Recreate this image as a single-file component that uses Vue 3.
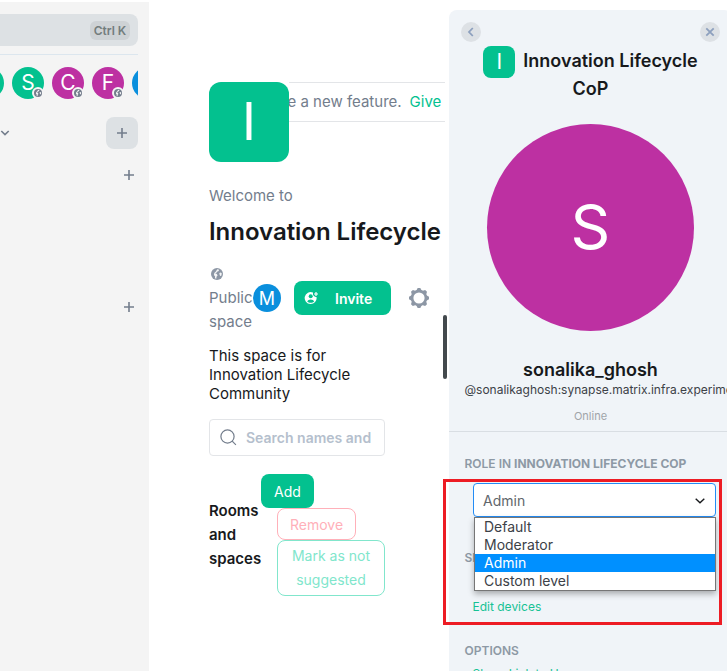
<script setup>
const rooms = [
  { letter: 'S', color: 'green' },
  { letter: 'C', color: 'purple' },
  { letter: 'F', color: 'purple' },
]
const roles = ['Default', 'Moderator', 'Admin', 'Custom level']
const selected = 'Admin'
const teeth = [0, 45, 90, 135, 180, 225, 270, 315]
</script>

<template>
  <div class="app">
    <svg class="defs" width="0" height="0" aria-hidden="true">
      <symbol id="globe" viewBox="0 0 12 12">
        <circle cx="6" cy="6" r="6" fill="currentColor" />
        <path d="M6.200 1.200 8.200 1.700 7.400 3.200 6 3.700 5.500 4.800 4.200 5.300 5.900 6 6.600 7.400 5.500 8.700 5.300 10.800 3.900 10.200 4.100 8.400 2.900 7.100 3.300 5 4.900 3.400Z" class="land" />
        <path d="M8.300 4.900 9.800 4.600 10.800 5.500 10.300 7.700 9.100 7.900 8.600 6.500Z" class="land" />
      </symbol>
      <symbol id="plus" viewBox="0 0 10 10">
        <path d="M5 0v10M0 5h10" stroke="currentColor" stroke-width="1.6" />
      </symbol>
    </svg>

    <aside class="sidebar">
      <div class="search-bar"><kbd>Ctrl K</kbd></div>
      <div class="crumbs">
        <span class="crumb green cut-left"></span>
        <span v-for="r in rooms" :key="r.letter" class="crumb" :class="r.color">
          {{ r.letter }}
          <i class="badge"><svg width="8" height="8"><use href="#globe" /></svg></i>
        </span>
        <span class="crumb blue"></span>
      </div>
      <div class="space-head">
        <svg width="10" height="6" viewBox="0 0 10 6"><path d="M1.300 1 5 4.600 8.700 1" fill="none" stroke="currentColor" stroke-width="1.600" /></svg>
        <button class="plus-btn"><svg width="10" height="10"><use href="#plus" /></svg></button>
      </div>
      <div class="section-plus"><svg width="10" height="10"><use href="#plus" /></svg></div>
      <div class="section-plus second"><svg width="10" height="10"><use href="#plus" /></svg></div>
    </aside>

    <main class="main">
      <div class="hero">
        <div class="space-avatar">I</div>
        <div class="banner"><span class="banner-text">e a new feature.</span><a>Give</a></div>
      </div>
      <div class="welcome">Welcome to</div>
      <h1>Innovation Lifecycle</h1>
      <div class="info">
        <div class="visibility">
          <div class="globe-line"><svg width="12" height="12"><use href="#globe" /></svg></div>
          <div>Public</div>
          <div>space</div>
        </div>
        <span class="member">M</span>
        <button class="invite">
          <svg width="15" height="14" viewBox="0 0 15 14">
            <path d="M9 1.500A6 6 0 1 0 12.600 6.200L10.600 5.600 9 4Z" fill="#fff" />
            <circle cx="6.700" cy="5.200" r="2" fill="#03c18f" />
            <path d="M3.200 10.500c1-2.800 6-2.800 7 0-1.700 1.700-5.300 1.700-7 0Z" fill="#03c18f" />
            <path d="M12 1v4M10 3h4" stroke="#fff" stroke-width="1.200" />
          </svg>
          <span>Invite</span>
        </button>
        <svg class="gear" width="20" height="20" viewBox="-10 -10 20 20">
          <path v-for="t in teeth" :key="t" d="M-3.200-6.500-1.300-10H1.300L3.200-6.500Z" :transform="`rotate(${t})`" fill="currentColor" />
          <circle r="6.900" fill="none" stroke="currentColor" stroke-width="2.600" />
        </svg>
      </div>
      <p class="topic">This space is for<br>Innovation Lifecycle<br>Community</p>
      <div class="search">
        <svg width="17" height="17" viewBox="0 0 17 17"><g fill="none" stroke="#737d8c" stroke-width="1.200"><circle cx="7.500" cy="7.500" r="6.600" /><path d="m12.200 12.200 3.700 3.700" /></g></svg>
        <span>Search names and</span>
      </div>
      <div class="rooms">
        <div class="rooms-title">Rooms<br>and<br>spaces</div>
        <div class="actions">
          <button class="add">Add</button>
          <button class="remove">Remove</button>
          <button class="mark">Mark as not<br>suggested</button>
        </div>
      </div>
      <div class="scroll-thumb"></div>
    </main>

    <section class="panel">
      <div class="nav">
        <button><svg width="8" height="10" viewBox="0 0 8 10"><path d="M5.800 1 2 5l3.800 4" fill="none" stroke="currentColor" stroke-width="1.800" /></svg></button>
        <button><svg width="10" height="10" viewBox="0 0 10 10"><path d="m1.300 1.300 7.400 7.400M8.700 1.300 1.300 8.700" stroke="currentColor" stroke-width="1.800" /></svg></button>
      </div>
      <div class="title">
        <div class="title-row"><span class="mini">I</span><span class="title-text">Innovation Lifecycle</span></div>
        <div>CoP</div>
      </div>
      <div class="portrait">S</div>
      <h2>sonalika_ghosh</h2>
      <div class="user-id">@sonalikaghosh:synapse.matrix.infra.experiment</div>
      <div class="status">Online</div>
      <div class="details">
        <h3>ROLE IN <b>INNOVATION LIFECYCLE COP</b></h3>
        <div class="select">
          <span>{{ selected }}</span>
          <svg width="10" height="6" viewBox="0 0 10 6"><path d="M.7.8 5 4.700 9.300.8" fill="none" stroke="#17191c" stroke-width="1.400" /></svg>
          <ul class="options">
            <li v-for="r in roles" :key="r" :class="{ active: r === selected }">{{ r }}</li>
          </ul>
        </div>
        <h3 class="sessions">SESSIONS</h3>
        <a class="link">Edit devices</a>
        <h3 class="options-title">OPTIONS</h3>
        <a class="link share">Share Link to User</a>
      </div>
    </section>
    <div class="highlight"></div>
  </div>
</template>

<style>
body { background: #fff; overflow: hidden; }
</style>

<style scoped>
* { box-sizing: border-box; }
.app { position: relative; display: flex; width: 727px; height: 671px; overflow: hidden; font-family: Inter, "Liberation Sans", sans-serif; font-size: 15px; color: #17191c; white-space: nowrap; }
.defs { position: absolute; }
.land { fill: #fff; fill-opacity: .9; }
button { font: inherit; border: 0; padding: 0; display: flex; align-items: center; justify-content: center; }
svg { display: block; flex: none; }
h1, h2, h3, p, ul { margin: 0; padding: 0; }

.sidebar { flex: none; width: 149px; margin-top: 2px; padding: 12px 11px 0 0; background: #f4f4f4; color: #737d8c; }
.search-bar { height: 32px; background: #dde1e4; border-radius: 0 8px 8px 0; display: flex; align-items: center; justify-content: flex-end; padding-right: 8px; }
kbd { width: 40px; height: 19px; margin-top: 1px; border-radius: 6px; background: #ced2d5; font: 600 12px/19px Inter, sans-serif; text-align: center; color: #737d7d; }
.crumbs { display: flex; gap: 8px; margin-top: 8px; height: 46px; padding-top: 12px; border-top: 1px solid #dce6ee; overflow: hidden; }
.crumb { position: relative; flex: none; width: 32px; height: 32px; border-radius: 50%; color: #fff; font-size: 21px; line-height: 32px; text-align: center; }
.cut-left { margin-left: -28px; }
.green { background: #03c18f; }
.purple { background: #bd30a2; }
.blue { background: #0a8fdd; }
.badge { position: absolute; right: 0; bottom: 0; width: 12px; height: 12px; border-radius: 50%; background: #f4f4f4; color: #737d8c; display: flex; align-items: center; justify-content: center; }
.space-head { display: flex; align-items: center; justify-content: space-between; margin-top: 17px; }
.plus-btn { width: 32px; height: 32px; border-radius: 8px; background: #dde1e4; color: #737d8c; }
.section-plus { display: flex; justify-content: flex-end; margin: 21px 4px 0 0; }
.section-plus.second { margin-top: 122px; }

.main { position: relative; flex: none; width: 300px; padding: 82px 4px 0 60px; }
.hero { display: flex; height: 80px; }
.space-avatar { flex: none; width: 80px; height: 80px; border-radius: 12px; background: #03c18f; color: #fff; font-size: 52px; line-height: 80px; text-align: center; }
.banner { flex: 1; height: 40px; border: solid #e3e5e8; border-width: 1px 0; overflow: hidden; display: flex; gap: 8px; line-height: 38px; color: #737d8c; }
.banner-text { margin-left: -1.5px; }
.banner a { color: #03c18f; }
.welcome { margin-top: 22px; line-height: 24px; color: #737d8c; }
h1 { margin-top: 9px; font-size: 24px; line-height: 29px; font-weight: 600; letter-spacing: -.03px; }
.info { display: flex; align-items: center; margin-top: 16px; height: 72px; }
.visibility { width: 44px; line-height: 24px; color: #737d8c; }
.globe-line { height: 24px; padding: 6px 0 0 2px; color: #8d97a5; }
.member { width: 28px; height: 28px; border-radius: 50%; background: #0a8fdd; color: #fff; font-size: 18px; line-height: 29px; text-align: center; }
.invite { width: 97px; height: 34px; margin-left: 13px; border-radius: 8px; background: #03c18f; color: #fff; font-weight: 600; font-size: 14px; gap: 16px; justify-content: flex-start; padding-left: 10px; }
.gear { margin-left: 18px; color: #8d97a5; }
.topic { margin-top: 12px; line-height: 19px; }
.search { width: 176px; height: 37px; margin-top: 16px; border: 1px solid #e3e5e8; border-radius: 4px; display: flex; align-items: center; gap: 9px; padding-left: 10px; font-size: 14px; font-weight: 600; color: #b5bfcd; }
.rooms { display: flex; align-items: center; margin-top: 18px; }
.rooms-title { width: 52px; line-height: 24px; font-weight: 600; }
.actions { display: flex; flex-direction: column; align-items: flex-start; }
.actions button { border-radius: 8px; font-size: 14px; background: #fff; margin-left: 16px; }
.actions .add { width: 53px; height: 34px; margin-left: 0; background: #03c18f; color: #fff; }
.actions .remove { width: 79px; height: 32px; border: 1px solid #ffb0b9; color: #ffb0b9; }
.actions .mark { width: 108px; height: 56px; border: 1px solid #81e6cc; color: #81e6cc; line-height: 24px; }
.scroll-thumb { position: absolute; right: 2px; top: 315px; width: 4px; height: 64px; border-radius: 2px; background: #43494d; }

.panel { flex: none; width: 283px; height: 680px; margin-top: 10px; padding-top: 12px; border-radius: 8px; background: #f0f4f8; text-align: center; }
.nav { display: flex; justify-content: space-between; padding: 0 12px; }
.nav button { width: 20px; height: 20px; border-radius: 50%; background: #dde1e5; color: #8da0be; }
.title { margin-top: 4px; font-size: 18px; line-height: 28px; font-weight: 600; }
.title-row { display: flex; align-items: center; justify-content: center; height: 32px; gap: 8px; margin-bottom: -3px; }
.title-text { margin-bottom: 2px; }
.mini { width: 32px; height: 32px; border-radius: 8px; background: #03c18f; color: #fff; font-size: 21px; font-weight: 400; line-height: 32px; }
.portrait { width: 207px; height: 207px; margin: 21px auto 0; border-radius: 50%; background: #bd30a2; color: #fff; font-size: 62px; line-height: 205px; }
h2 { margin-top: 27px; font-size: 18px; line-height: 24px; font-weight: 600; }
.user-id { padding-left: 15.5px; text-align: left; font-size: 12px; line-height: 16px; color: #3c4147; }
.status { margin-top: 10px; height: 23px; font-size: 11px; line-height: 16px; color: #a0a5a9; }
.details { border-top: 1px solid #d9dee3; padding: 24px 15px 0 15.5px; text-align: left; }
h3 { font-size: 12px; line-height: 16px; font-weight: 600; color: #8d99a5; }
h3 b { font-weight: 650; }
.select { position: relative; width: 243px; height: 34px; margin: 11px 0 0 8.5px; padding: 1px 10px 0 9px; display: flex; align-items: center; justify-content: space-between; border: 1px solid #238cf5; border-radius: 4px; background: #fff; color: #61666b; font-size: 14px; }
.options { position: absolute; top: 33px; left: 0; z-index: 2; width: 242px; height: 74px; list-style: none; border: 1px solid #767676; background: #fff; box-shadow: 0 3px 6px rgba(0, 0, 0, .3); font-size: 14px; line-height: 18px; color: #3c4147; }
.options li { height: 18px; padding-left: 9px; }
.options .active { background: #0090ff; color: #fff; }
.sessions { margin-top: 33px; }
.link { display: block; margin: 33px 0 0 8px; font-size: 12px; line-height: 16px; color: #17c294; }
.options-title { margin-top: 28px; }
.share { margin-top: 7px; }
.highlight { position: absolute; z-index: 3; left: 443px; top: 479px; width: 279px; height: 146px; border: 3px solid #ed1c24; }
</style>
